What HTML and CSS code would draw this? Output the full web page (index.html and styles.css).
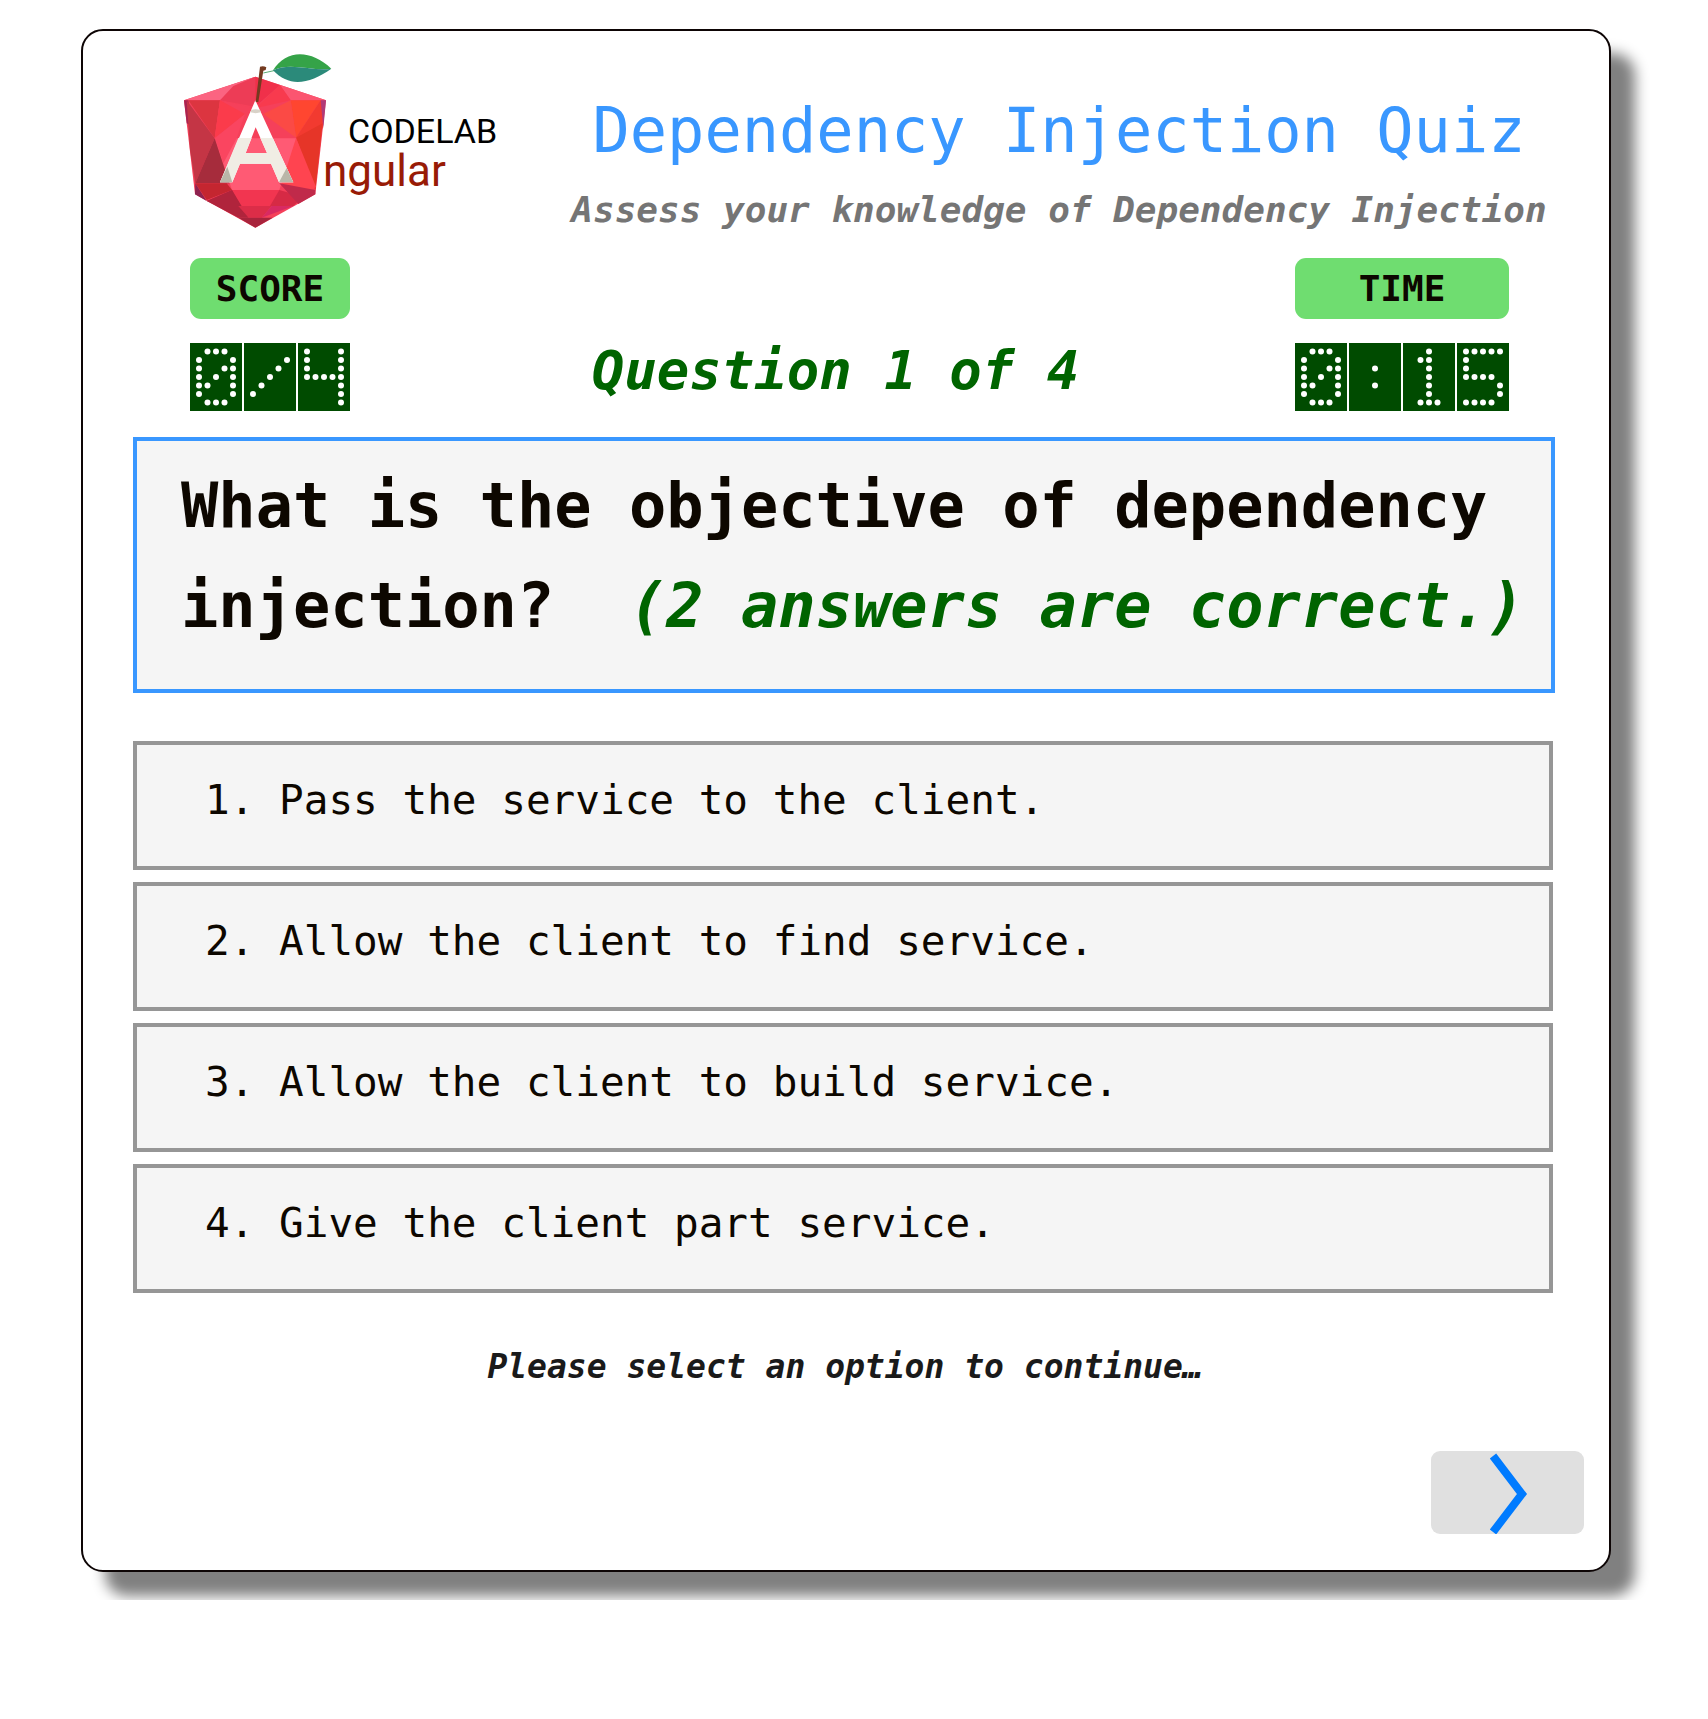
FILE: index.html
```html
<!DOCTYPE html>
<html lang="en">
<head>
  <meta charset="utf-8">
  <meta name="viewport" content="width=device-width, initial-scale=1">
  <title>Dependency Injection Quiz</title>
  <link rel="stylesheet" href="styles.css">
</head>
<body>
  <div class="page">
    <main class="card">
      <header class="header">
        <svg class="logo" viewBox="0 0 340 200" role="img" aria-label="Codelab Angular">
          <g transform="scale(0.33333)">
            <path fill="#f5405a" d="M256 110 468 181 436 463 256 563 75 463 42 181z"/>
            <path fill="#fb6481" d="M256 110 150 181H42z"/>
            <path fill="#ed3c56" d="M256 110 190 138 150 181 256 200z"/>
            <path fill="#f0304a" d="M256 110 330 135 256 200z"/>
            <path fill="#fb5570" d="M275 116 468 181H362L330 135z"/>
            <path fill="#f83a4e" d="M330 135 362 181 256 205z"/>
            <path fill="#dc3540" d="M55 181H150L134 295z"/>
            <path fill="#a82452" d="M42 181H55L68 260 134 295 50 250z"/>
            <path fill="#c43545" d="M50 181 134 295 76 430 60 330z"/>
            <path fill="#f5405a" d="M150 181 256 205 235 220 134 295z"/>
            <path fill="#fb3b4b" d="M150 181 225 222 134 295z"/>
            <path fill="#ff4630" d="M362 181H452L378 293z"/>
            <path fill="#f23a30" d="M452 181 460 200 458 265 378 293z"/>
            <path fill="#b03a78" d="M452 181H468L460 265z"/>
            <path fill="#fb4a45" d="M362 181 378 293 280 222z"/>
            <path fill="#e63528" d="M458 250 436 450 378 293z"/>
            <path fill="#ff4450" d="M378 293 438 440 400 470 328 430z"/>
            <path fill="#ff5a74" d="M134 295H378L328 450H186z"/>
            <path fill="#fa4560" d="M134 295 225 222 200 295 160 370z"/>
            <path fill="#a62c3c" d="M134 295 178 430 76 430z"/>
            <path fill="#c42630" d="M76 430H170L186 450 110 480z"/>
            <path fill="#8e2350" d="M76 430 110 483 75 463z"/>
            <path fill="#d62a45" d="M110 483 186 450H328L400 470 370 498 200 498z"/>
            <path fill="#f23550" d="M186 450H328L300 498H212z"/>
            <path fill="#b0243c" d="M110 483 186 450 236 533 205 533z"/>
            <path fill="#dc2d48" d="M205 498H305L275 533H236z"/>
            <path fill="#d82a62" d="M305 498 370 498 275 533z"/>
            <path fill="#a8243c" d="M205 533H308L256 563z"/>
            <path fill="#c02a4a" d="M436 450V463L385 492 328 430z"/>
            <path fill="#fff" fill-rule="evenodd" d="M256 181 370 427H327L303 371H210L187 427H150zM257 262 227 339H291z"/>
            <path fill="#f0ede4" fill-rule="evenodd" d="M205 294H308L370 427H327L303 371H210L187 427H150zM245 294 227 339H291L271 294z"/>
            <path fill="#b9b6a8" d="M172 380 187 427H150zM350 384 370 427H327z"/>
            <path fill="#d8d2c8" d="M244 210Q257 205 270 210L273 217Q257 222 241 217z"/>
            <path fill="#743a20" d="M270 80Q280 76 289 82L287 90 280 92 265 186H257z"/>
            <path fill="none" stroke="#5aac72" stroke-width="3" d="M280 99 312 92"/>
            <path fill="#35a348" d="M309 91C350 25 425 30 484 86 430 95 360 65 309 91z"/>
            <path fill="#2b8a7a" d="M309 91C360 65 430 95 484 86 420 130 360 145 309 91z"/>
          </g>
          <text class="logo-top" x="178" y="103">CODELAB</text>
          <text class="logo-bottom" x="153" y="146">ngular</text>
        </svg>
        <div class="titles">
          <h1 class="title">Dependency Injection Quiz</h1>
          <p class="subtitle">Assess your knowledge of Dependency Injection</p>
        </div>
      </header>

      <section class="status">
        <div class="counter">
          <h2 class="badge">SCORE</h2>
          <div class="display" data-value="0/4" role="img" aria-label="0/4"></div>
        </div>
        <p class="progress">Question 1 of 4</p>
        <div class="counter">
          <h2 class="badge">TIME</h2>
          <div class="display" data-value="0:15" role="img" aria-label="0:15"></div>
        </div>
      </section>

      <section class="question">
        <p class="question-text">What is the objective of dependency injection?&nbsp; <em class="hint">(2&nbsp;answers are correct.)</em></p>
      </section>

      <div class="options">
        <button class="option" type="button">1. Pass the service to the client.</button>
        <button class="option" type="button">2. Allow the client to find service.</button>
        <button class="option" type="button">3. Allow the client to build service.</button>
        <button class="option" type="button">4. Give the client part service.</button>
      </div>

      <p class="message">Please select an option to continue…</p>

      <div class="actions">
        <button class="next" type="button" aria-label="Next question">
          <svg class="chevron" viewBox="0 0 40 83" aria-hidden="true">
            <path d="M5 5 34 43 5 81" fill="none" stroke="#007bff" stroke-width="8"/>
          </svg>
        </button>
      </div>
    </main>
  </div>
  <script src="display.js"></script>
</body>
</html>
```

FILE: styles.css
```css
* {
  box-sizing: border-box;
}

body {
  margin: 0;
  background: #fff;
  color: #0d0700;
  font-family: "DejaVu Sans Mono", monospace;
}

h1, h2, p {
  margin: 0;
}

.page {
  overflow: hidden;
  padding: 29px 97px 28px 81px;
}

.card {
  border: 2px solid #0d0505;
  border-radius: 22px;
  background: #fff;
  box-shadow: 24px 24px 14px #808080;
  padding: 9px 25px 36px 50px;
}

.header {
  display: flex;
  gap: 32px;
}

.logo {
  flex: none;
  width: 340px;
  height: 200px;
  margin-left: 37px;
}

.logo-top {
  fill: #000;
  font: 34px Roboto, sans-serif;
}

.logo-bottom {
  fill: #981b06;
  font: 44px Roboto, sans-serif;
}

.titles {
  flex: 1;
  padding: 49px 8px 0 0;
  text-align: center;
}

.title {
  color: #3997ff;
  font-size: 62px;
  font-weight: 400;
  line-height: 84px;
  white-space: nowrap;
}

.subtitle {
  color: #757575;
  font-size: 36px;
  font-style: italic;
  font-weight: 700;
  line-height: 74px;
  white-space: nowrap;
}

.status {
  display: flex;
  align-items: flex-end;
  justify-content: space-between;
  margin: 11px 75px 0 57px;
}

.badge {
  border-radius: 11px;
  background: #6fdd70;
  font-size: 36px;
  line-height: 61px;
  text-align: center;
}

.display {
  display: flex;
  gap: 2px;
  margin-top: 24px;
}

.cell {
  width: 52px;
  height: 68px;
  background: #004b00;
  fill: #fff;
}

.progress {
  padding-left: 26px;
  color: #006400;
  font-size: 54px;
  font-style: italic;
  font-weight: 700;
  line-height: 80px;
}

.question {
  min-height: 256px;
  margin: 26px 29px 0 0;
  border: 4px solid #3997ff;
  background: #f5f5f5;
  padding: 15px 16px 0 44px;
}

.question-text {
  font-size: 62px;
  font-weight: 700;
  line-height: 100px;
}

.hint {
  color: #006400;
}

.options {
  display: grid;
  gap: 12px;
  margin: 48px 31px 0 0;
}

.option {
  height: 129px;
  border: 4px solid #969696;
  background: #f5f5f5;
  padding: 0 68px 12px;
  color: inherit;
  font: 41px "DejaVu Sans Mono", monospace;
  text-align: left;
}

.message {
  margin: 44px 27px 0 0;
  color: #1a1a1a;
  font-size: 33px;
  font-style: italic;
  font-weight: 700;
  line-height: 60px;
  text-align: center;
}

.actions {
  display: flex;
  justify-content: flex-end;
  margin-top: 54px;
}

.next {
  display: flex;
  justify-content: center;
  width: 153px;
  height: 83px;
  border: 0;
  border-radius: 9px;
  background: #e0e0e0;
  padding: 0;
}

.chevron {
  width: 40px;
  height: 83px;
}
```

FILE: display.js
```js
// Dot-matrix characters, seven rows of five dots each.
const GLYPHS = {
  "0": [".###.", "#...#", "#..##", "#.#.#", "##..#", "#...#", ".###."],
  "1": ["..#..", ".##..", "..#..", "..#..", "..#..", "..#..", ".###."],
  "4": ["#...#", "#...#", "#...#", "#####", "....#", "....#", "....#"],
  "5": ["#####", "#....", "#....", "####.", "....#", "....#", "####."],
  "/": [".....", "....#", "...#.", "..#..", ".#...", "#....", "....."],
  ":": [".....", ".....", "..#..", ".....", "..#..", ".....", "....."]
};

function drawCell(character) {
  let dots = "";
  GLYPHS[character].forEach((row, y) => {
    [...row].forEach((dot, x) => {
      if (dot === "#") {
        dots += `<circle cx="${18 + x * 17}" cy="${17 + y * 17}" r="6"/>`;
      }
    });
  });
  return `<svg class="cell" viewBox="0 0 104 136" aria-hidden="true">${dots}</svg>`;
}

document.querySelectorAll(".display").forEach((display) => {
  display.innerHTML = [...display.dataset.value].map(drawCell).join("");
});
```
